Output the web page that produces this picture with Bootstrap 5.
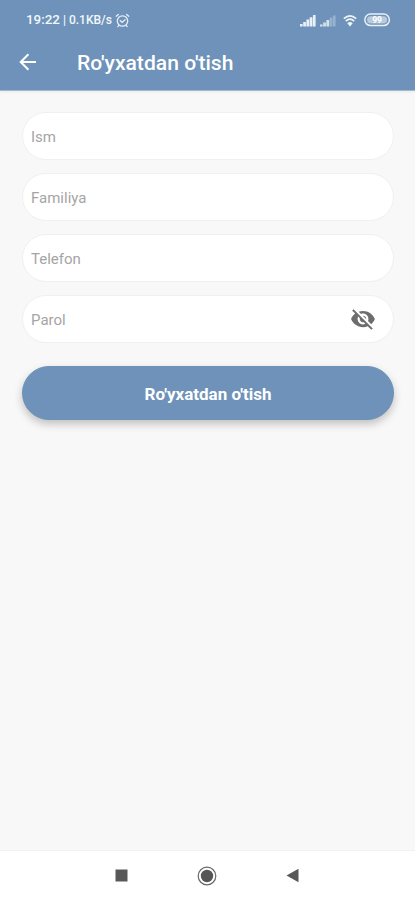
<!DOCTYPE html>
<html lang="uz">
<head>
<meta charset="utf-8">
<meta name="viewport" content="width=device-width, initial-scale=1">
<title>Ro'yxatdan o'tish</title>
<link href="https://cdn.jsdelivr.net/npm/bootstrap@5.3.0/dist/css/bootstrap.min.css" rel="stylesheet">
<style>
body { font-family: Roboto, "Liberation Sans", sans-serif; background: #f8f8f8; height: 900px; overflow: hidden; }
svg { display: block; flex: none; }
.app-header { background: #6e92b9; height: 91px; border-bottom: 1px solid #a3b9d0; box-shadow: 0 1px 3px rgba(0,0,0,.06); }
.status-bar { height: 40px; padding: 0 24px 0 26px; font-weight: 500; line-height: 40px; color: #f2f7fb; }
.status-clock { width: 37px; font-size: 13.4px; }
.status-speed { width: 52px; font-size: 12px; white-space: nowrap; }
.wifi, .battery { margin-left: 7px; }
.title-bar { height: 44px; padding-left: 19px; }
.screen-title { font-size: 21.1px; font-weight: 500; line-height: 44px; margin: 0 0 0 40px; padding-top: 1px; white-space: nowrap; }
.signup { padding: 21px 21px 0 22px; }
.field { height: 48px; margin-bottom: 13px; background: #fff; border: 1px solid #f0f0f0; padding: 0 17px 0 8px; }
.field .form-control { font-size: 15px; color: #555; padding: 2px 0 0; }
.field .form-control::placeholder { color: #a5a5a5; }
.submit { --bs-btn-bg: #6e92b9; --bs-btn-border-color: #6e92b9; --bs-btn-color: #fff; height: 54px; margin-top: 10px; padding: 3px 0 0; font-size: 17px; font-weight: 700; box-shadow: 0 4px 8px rgba(0,0,0,.23); }
.system-nav { height: 50px; background: #fff; border-top: 1px solid #f1f1f1; padding-left: 115px; gap: 69px; }
</style>
</head>
<body class="d-flex flex-column">
<header class="app-header text-white">
  <div class="status-bar d-flex align-items-center">
    <span class="status-clock">19:22</span>
    <span class="status-speed">| 0.1KB/s</span>
    <svg width="15" height="15" viewBox="0 0 15 15" fill="none" stroke="#e6eef6" stroke-width="1.3" stroke-linecap="round"><circle cx="7.5" cy="8" r="5.2"/><path d="M1.2 3.2 3.4 1.4M13.8 3.2 11.6 1.4M5.2 7.6 7.2 9.4 10 6.8M3.8 12.4 2.8 13.6M11.2 12.4l1 1.2"/></svg>
    <div class="ms-auto d-flex align-items-center">
      <svg width="16" height="13" viewBox="0 0 16 13" fill="#e9f1f7"><path d="M0 10h2.6v2.4H0zM3.2 8h2.7v4.4H3.2zM6.4 5.6h2.8v6.8H6.4zM9.7 3.2h2.8v9.2H9.7zM13 1h2.6v11.4H13z"/></svg>
      <svg class="ms-1" width="16" height="13" viewBox="0 0 16 13" fill="#d5e3ea"><path d="M0 10.4h2.6v2H0zM3.2 8.4h2.7v4H3.2zM6.4 6h2.8v6.4H6.4z"/><path opacity=".4" d="M9.7 3.6h2.8v8.8H9.7zM13 1.4h2.6v11H13z"/></svg>
      <svg class="wifi" width="14" height="13" viewBox="0 0 14 13" fill="none" stroke="#eef4f8" stroke-width="1.7"><path d="M.8 4.6Q7-1 13.2 4.6M2.8 7.2Q7 3.2 11.2 7.2"/><path d="M4.3 9.2Q7 7 9.7 9.2L7 12.4z" fill="#eef4f8" stroke="none"/></svg>
      <svg class="battery" width="27" height="14" viewBox="0 0 27 14"><rect x=".8" y="1" width="24.6" height="11.6" rx="5.8" fill="none" stroke="#e9f1f7" stroke-width="1.5"/><rect x="3" y="3.2" width="20.2" height="7.2" rx="3.6" fill="#b8cbdc"/><text x="13.1" y="10" text-anchor="middle" font-size="8.5" font-weight="700" fill="#fff">99</text></svg>
    </div>
  </div>
  <div class="title-bar d-flex align-items-center">
    <svg width="18" height="18" viewBox="0 0 18 18" fill="none" stroke="#fff" stroke-width="2"><path d="M17 9H2M9.4 1.3 1.7 9l7.7 7.7"/></svg>
    <h1 class="screen-title">Ro'yxatdan o'tish</h1>
  </div>
</header>
<main class="flex-grow-1">
  <form class="signup">
    <div class="field rounded-pill d-flex align-items-center"><input class="form-control border-0 bg-transparent shadow-none" type="text" placeholder="Ism" aria-label="Ism"></div>
    <div class="field rounded-pill d-flex align-items-center"><input class="form-control border-0 bg-transparent shadow-none" type="text" placeholder="Familiya" aria-label="Familiya"></div>
    <div class="field rounded-pill d-flex align-items-center"><input class="form-control border-0 bg-transparent shadow-none" type="tel" placeholder="Telefon" aria-label="Telefon"></div>
    <div class="field rounded-pill d-flex align-items-center">
      <input class="form-control border-0 bg-transparent shadow-none" type="password" placeholder="Parol" aria-label="Parol">
      <svg width="26" height="26" viewBox="0 0 24 24" fill="#6d6d6d"><path d="M12 7c2.76 0 5 2.24 5 5 0 .65-.13 1.26-.36 1.83l2.92 2.92c1.51-1.26 2.7-2.89 3.43-4.75-1.73-4.39-6-7.5-11-7.5-1.4 0-2.74.25-3.98.7l2.16 2.16C10.74 7.13 11.35 7 12 7zM2 4.27l2.28 2.28.46.46C3.08 8.3 1.78 10.02 1 12c1.73 4.39 6 7.5 11 7.5 1.55 0 3.03-.3 4.38-.84l.42.42L19.73 22 21 20.73 3.27 3 2 4.27zM7.53 9.8l1.55 1.55c-.05.21-.08.43-.08.65 0 1.66 1.34 3 3 3 .22 0 .44-.03.65-.08l1.55 1.55c-.67.33-1.41.53-2.2.53-2.76 0-5-2.24-5-5 0-.79.2-1.53.53-2.2zm4.31-.78 3.15 3.15.02-.16c0-1.66-1.34-3-3-3l-.17.01z"/></svg>
    </div>
    <button type="button" class="submit btn rounded-pill w-100">Ro'yxatdan o'tish</button>
  </form>
</main>
<footer class="system-nav d-flex align-items-center">
  <svg width="13" height="13" viewBox="0 0 13 13"><path d="M.5.5h12v12H.5z" fill="#585858"/></svg>
  <svg width="20" height="20" viewBox="0 0 20 20"><circle cx="10" cy="10" r="8.8" fill="none" stroke="#686868" stroke-width="1.2"/><circle cx="10" cy="10" r="6.2" fill="#555"/></svg>
  <svg width="13" height="15" viewBox="0 0 13 15"><path d="M12.5.7v13.6L.5 7.5z" fill="#585858"/></svg>
</footer>
<script src="https://cdn.jsdelivr.net/npm/bootstrap@5.3.0/dist/js/bootstrap.bundle.min.js"></script>
</body>
</html>
